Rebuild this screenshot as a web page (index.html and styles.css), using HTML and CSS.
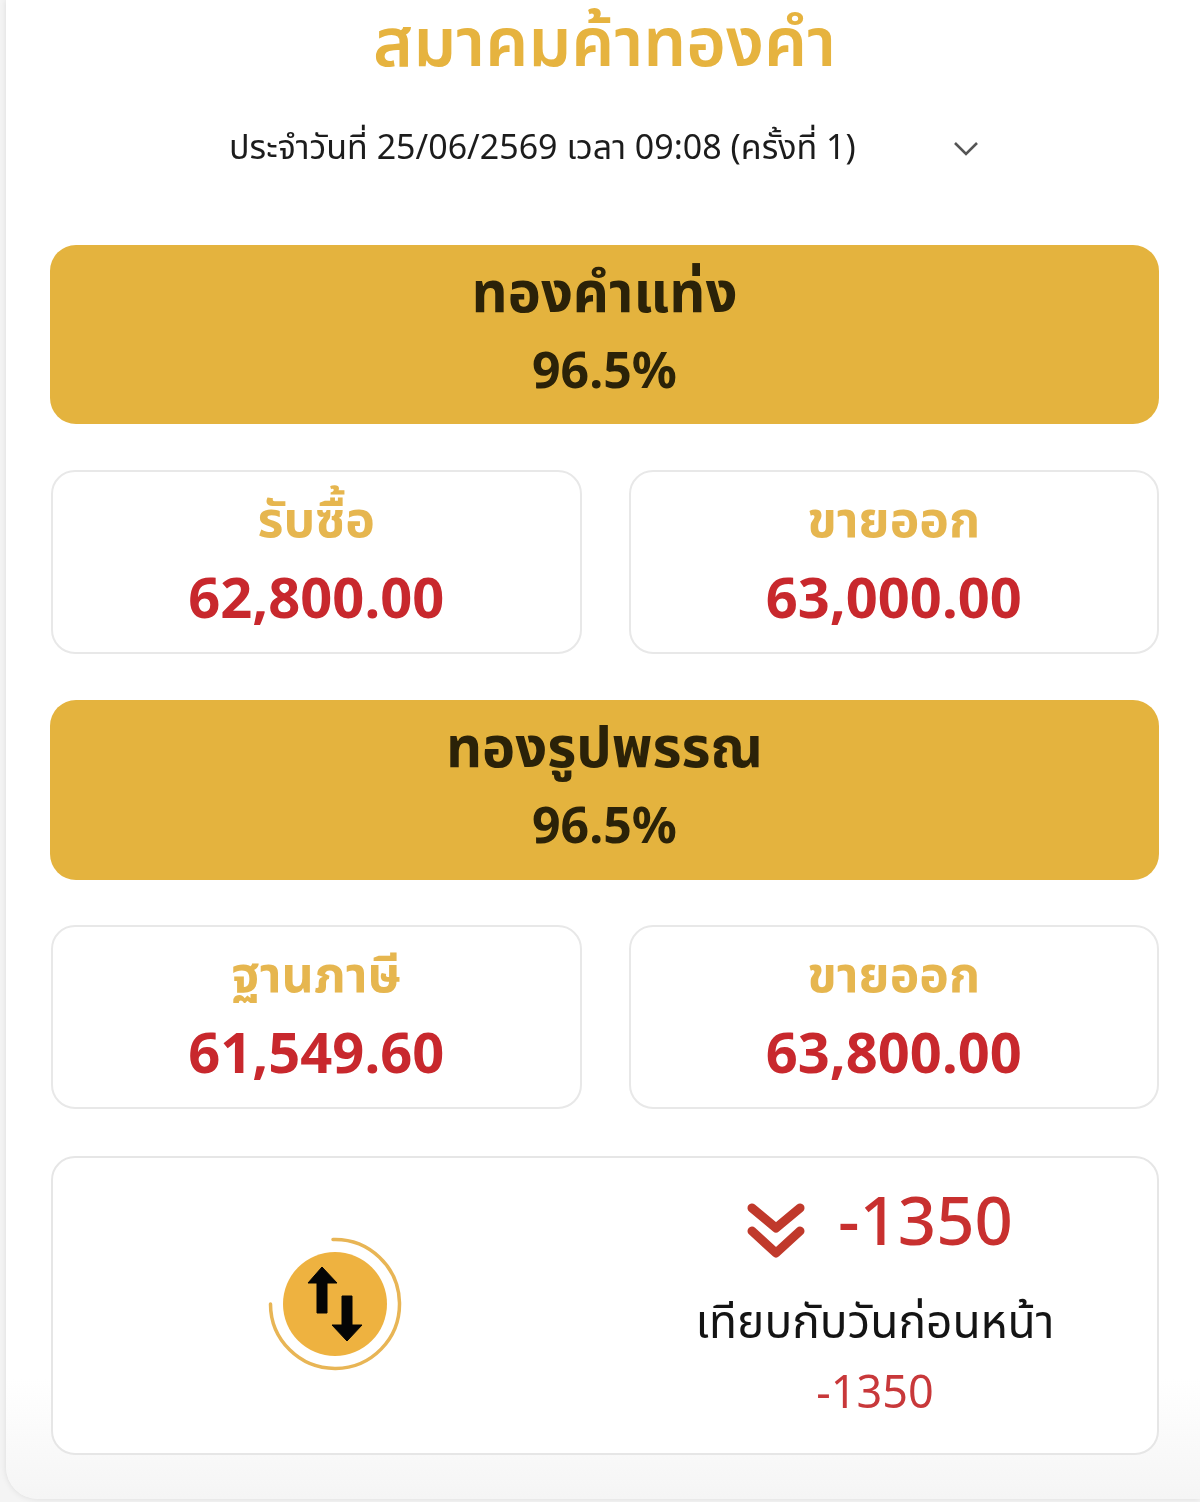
FILE: index.html
```html
<!DOCTYPE html>
<html lang="th">
<head>
    <meta charset="UTF-8">
    <meta name="viewport" content="width=device-width, initial-scale=1.0">
    <title>สมาคมค้าทองคำ</title>
    <link rel="stylesheet" href="styles.css">
</head>
<body>
    <main class="panel">
        <h1 class="title">สมาคมค้าทองคำ</h1>

        <div class="date-select">
            <span class="date-text">ประจำวันที่ 25/06/2569 เวลา 09:08 (ครั้งที่ 1)</span>
            <svg class="date-chevron" viewBox="0 0 26 16" width="26" height="16" fill="none" stroke="#555" stroke-width="2.6">
                <path d="M2 3l11 11L24 3"/>
            </svg>
        </div>

        <section class="band">
            <div class="band-name">ทองคำแท่ง</div>
            <div class="band-pct">96.5%</div>
        </section>
        <div class="price-row">
            <div class="price-card">
                <div class="price-label">รับซื้อ</div>
                <div class="price-value">62,800.00</div>
            </div>
            <div class="price-card">
                <div class="price-label">ขายออก</div>
                <div class="price-value">63,000.00</div>
            </div>
        </div>

        <section class="band band-second">
            <div class="band-name">ทองรูปพรรณ</div>
            <div class="band-pct">96.5%</div>
        </section>
        <div class="price-row">
            <div class="price-card">
                <div class="price-label">ฐานภาษี</div>
                <div class="price-value">61,549.60</div>
            </div>
            <div class="price-card">
                <div class="price-label">ขายออก</div>
                <div class="price-value">63,800.00</div>
            </div>
        </div>

        <section class="change-card">
            <div class="change-icon">
                <svg viewBox="0 0 134 134" width="134" height="134">
                    <circle cx="67" cy="67" r="52" fill="#eeb240"/>
                    <path d="M65 2.5A64.5 64.5 0 1 1 2.5 67" fill="none" stroke="#e8b555" stroke-width="3.5" stroke-linecap="round"/>
                    <path d="M54 30L69 46H59V76H49V46H40Z" fill="#050505" stroke="#050505" stroke-linejoin="round"/>
                    <path d="M74 59H84V88H94L79 104L64 88H74Z" fill="#050505" stroke="#050505" stroke-linejoin="round"/>
                </svg>
            </div>
            <div class="change-info">
                <div class="change-top">
                    <svg class="change-arrow" viewBox="0 0 58 56" width="58" height="56" fill="none" stroke="#c0392b" stroke-width="9" stroke-linecap="round" stroke-linejoin="round">
                        <path d="M5 5l24 20L53 5"/>
                        <path d="M5 28l24 22 24-22"/>
                    </svg>
                    <span class="change-big">-1350</span>
                </div>
                <div class="change-label">เทียบกับวันก่อนหน้า</div>
                <div class="change-small">-1350</div>
            </div>
        </section>
    </main>
</body>
</html>
```
FILE: styles.css
```css
* {
    box-sizing: border-box;
}
html, body {
    height: 100%;
}
body {
    margin: 0;
    background-color: #f4f4f4;
    font-family: "Noto Sans", "Noto Sans Thai", sans-serif;
    overflow: hidden;
}
.panel {
    height: 1499px;
    margin-left: 6px;
    padding: 0 41px 0 44px;
    background: linear-gradient(#fff 92%, #f5f5f5 100%);
    border-radius: 0 0 0 32px;
    box-shadow: 0 0 6px rgba(0, 0, 0, 0.1);
    filter: blur(0.6px);
}
.title {
    height: 88px;
    margin: 0;
    color: #e6b33f;
    font-size: 68px;
    font-weight: 600;
    line-height: 80px;
    text-align: center;
}
.date-select {
    display: flex;
    align-items: center;
    height: 157px;
    padding-bottom: 37px;
    color: #1c1c1c;
    font-size: 34px;
}
.date-text {
    margin-left: 179px;
    width: 724px;
}
.band {
    height: 179px;
    padding-top: 16px;
    background-color: #e4b33e;
    border-radius: 26px;
    color: #2b2208;
    font-weight: 700;
    text-align: center;
}
.band-second {
    height: 180px;
}
.band-name {
    font-size: 56px;
    line-height: 58px;
}
.band-pct {
    margin-top: 21px;
    font-size: 50px;
    line-height: 58px;
}
.price-row {
    display: grid;
    grid-template-columns: 1fr 1fr;
    gap: 47px;
    margin: 46px 0 46px 1px;
}
.band-second + .price-row {
    margin-top: 45px;
    margin-bottom: 47px;
}
.price-card {
    height: 184px;
    padding-top: 19px;
    background-color: #fff;
    border: 2px solid #e8e8e8;
    border-radius: 24px;
    text-align: center;
}
.price-label {
    color: #e6b64f;
    font-size: 50px;
    font-weight: 700;
    line-height: 54px;
}
.price-value {
    margin-top: 21px;
    color: #c8282d;
    font-size: 56px;
    font-weight: 700;
    line-height: 60px;
}
.change-card {
    display: flex;
    height: 299px;
    margin: 0 0 0 1px;
    background-color: #fff;
    border: 2px solid #e6e6e6;
    border-radius: 24px;
}
.change-icon {
    display: flex;
    align-items: center;
    width: 578px;
    padding-left: 215px;
    padding-bottom: 4px;
}
.change-info {
    flex: 1;
    padding-top: 21px;
    text-align: center;
}
.change-top {
    display: flex;
    align-items: center;
    height: 80px;
    padding-left: 116px;
}
.change-arrow {
    margin-top: 24px;
}
.change-big {
    margin-left: 33px;
    color: #c8302f;
    font-size: 67px;
    font-weight: 500;
    line-height: 80px;
}
.change-label {
    margin-top: 34px;
    margin-right: 38px;
    color: #141414;
    font-size: 46px;
    line-height: 54px;
}
.change-small {
    margin-top: 17px;
    margin-right: 38px;
    color: #c8383a;
    font-size: 45px;
    line-height: 54px;
}
```
